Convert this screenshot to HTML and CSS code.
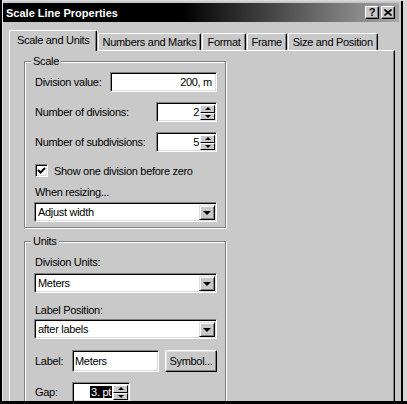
FILE: index.html
```html
<!DOCTYPE html>
<html lang="en">
<head>
    <meta charset="UTF-8">
    <meta name="viewport" content="width=device-width, initial-scale=1.0">
    <title>Scale Line Properties</title>
    <link rel="stylesheet" href="styles.css">
</head>
<body>

    <div class="window">
        <div class="titlebar">
            <span class="title">Scale Line Properties</span>
            <div class="title-buttons">
                <span class="tbtn help">?</span>
                <span class="tbtn">
                    <svg width="8" height="7" viewBox="0 0 8 7"><path d="M0.5 0.5 L7.5 6.5 M7.5 0.5 L0.5 6.5" stroke="#000" stroke-width="1.6"/></svg>
                </span>
            </div>
        </div>

        <div class="tabs">
            <div class="tab active">Scale and Units</div>
            <div class="tab">Numbers and Marks</div>
            <div class="tab">Format</div>
            <div class="tab">Frame</div>
            <div class="tab">Size and Position</div>
        </div>

        <div class="panel">
            <div class="group">
                <span class="legend">Scale</span>

                <div class="row first">
                    <span>Division value:</span>
                    <div class="field value">200, m</div>
                </div>
                <div class="row">
                    <span>Number of divisions:</span>
                    <div class="field spinbox">
                        <span class="num">2</span>
                        <div class="spin"><i class="up"></i><i class="down"></i></div>
                    </div>
                </div>
                <div class="row">
                    <span>Number of subdivisions:</span>
                    <div class="field spinbox">
                        <span class="num">5</span>
                        <div class="spin"><i class="up"></i><i class="down"></i></div>
                    </div>
                </div>

                <label class="check">
                    <span class="box">
                        <svg width="9" height="9" viewBox="0 0 9 9"><path d="M1 4 L3.5 6.5 L8 2" fill="none" stroke="#000" stroke-width="2"/></svg>
                    </span>
                    Show one division before zero
                </label>

                <div class="caption resize">When resizing...</div>
                <div class="field select">
                    <span class="choice">Adjust width</span>
                    <span class="drop"></span>
                </div>
            </div>

            <div class="group units">
                <span class="legend">Units</span>

                <div class="caption first-caption">Division Units:</div>
                <div class="field select">
                    <span class="choice">Meters</span>
                    <span class="drop"></span>
                </div>

                <div class="caption position">Label Position:</div>
                <div class="field select near">
                    <span class="choice">after labels</span>
                    <span class="drop"></span>
                </div>

                <div class="row label-row">
                    <span class="short">Label:</span>
                    <div class="field text">Meters</div>
                    <button class="button">Symbol...</button>
                </div>
                <div class="row gap-row">
                    <span class="short">Gap:</span>
                    <div class="field spinbox gap">
                        <span class="num"><b class="selected">3. pt</b></span>
                        <div class="spin"><i class="up"></i><i class="down"></i></div>
                    </div>
                </div>
            </div>
        </div>
    </div>

</body>
</html>
```

FILE: styles.css
```css
body {
    margin: 0;
    background-color: #000;
    font-family: "Liberation Sans", Arial, sans-serif;
    font-size: 11px;
    letter-spacing: -0.3px;
    color: #000;
    height: 404px;
    overflow: hidden;
}
.window {
    margin-left: 2px;
    width: 405px;
    height: 401px;
    box-sizing: border-box;
    background-color: #c9c9c9;
    border-top: 1px solid #dcdcdc;
    border-left: 1px solid #e4e4e4;
    border-right: 4px solid #d4d4d4;
    box-shadow: inset -2px 0 0 #000;
    padding: 2px 2px 0 0;
    display: flex;
    flex-direction: column;
    overflow: hidden;
}

/* Title bar */
.titlebar {
    flex-shrink: 0;
    height: 19px;
    margin-right: 2px;
    padding: 0 4px 0 3px;
    background: linear-gradient(to right, #000 45%, #a8a8a8);
    display: flex;
    align-items: center;
    justify-content: space-between;
}
.title {
    color: #fff;
    font-weight: bold;
    letter-spacing: 0;
}
.title-buttons {
    display: flex;
    gap: 2px;
}
.tbtn {
    width: 14px;
    height: 13px;
    box-sizing: border-box;
    background-color: #c9c9c9;
    border: 1px solid;
    border-color: #fff #000 #000 #fff;
    box-shadow: inset -1px -1px 0 #808080;
    display: flex;
    align-items: center;
    justify-content: center;
    font-weight: bold;
    font-size: 11px;
    line-height: 11px;
}

/* Tabs */
.tabs {
    flex-shrink: 0;
    height: 20px;
    margin-top: 8px;
    padding-left: 6px;
    display: flex;
    align-items: flex-end;
    gap: 1px;
}
.tab {
    height: 17px;
    box-sizing: border-box;
    padding: 0 4px;
    border-top: 1px solid #fff;
    border-left: 1px solid #fff;
    border-right: 1px solid #000;
    border-radius: 2px 2px 0 0;
    box-shadow: inset -1px 0 0 #808080;
    line-height: 16px;
    white-space: nowrap;
}
.tab.active {
    height: 21px;
    margin-bottom: -1px;
    padding: 0 6px 0 7px;
    background-color: #c9c9c9;
    line-height: 18px;
    position: relative;
    z-index: 1;
}

/* Page of the tab */
.panel {
    flex: 1;
    min-height: 0;
    margin: 0 6px;
    padding: 10px 0 0 14px;
    border-top: 1px solid #fff;
    border-left: 1px solid #fff;
    border-right: 1px solid #000;
    box-shadow: inset -1px 0 0 #808080;
}
.group {
    width: 202px;
    box-sizing: border-box;
    border: 1px solid #808080;
    box-shadow: inset 1px 1px 0 #fff, 1px 1px 0 #fff;
    padding: 0 8px 5px 10px;
}
.group.units {
    margin-top: 13px;
}
.legend {
    display: block;
    width: fit-content;
    margin: -7px 0 0 -4px;
    padding: 0 2px;
    line-height: 13px;
    background-color: #c9c9c9;
}

.row {
    height: 20px;
    margin-top: 10px;
    display: flex;
    align-items: center;
    justify-content: space-between;
}
.row.first {
    margin-top: 4px;
}
.caption {
    line-height: 13px;
}
.caption.resize {
    margin-top: 9px;
}
.caption.first-caption {
    margin-top: 8px;
}
.caption.position {
    margin-top: 11px;
}

/* Sunken edit fields */
.field {
    height: 20px;
    box-sizing: border-box;
    background-color: #fff;
    border: 1px solid;
    border-color: #808080 #fff #fff #808080;
    box-shadow: inset 1px 1px 0 #000, inset -1px -1px 0 #dcdcdc;
    padding: 2px 2px 1px 2px;
    line-height: 15px;
    white-space: nowrap;
}
.field.value {
    width: 107px;
    text-align: right;
    padding-right: 4px;
}
.field.spinbox {
    width: 61px;
    display: flex;
    padding-right: 1px;
}
.field.spinbox .num {
    flex: 1;
    text-align: right;
    padding-right: 1px;
}
.spin {
    width: 15px;
    display: flex;
    flex-direction: column;
}
.spin i {
    flex: 1;
    box-sizing: border-box;
    background-color: #c9c9c9;
    border: 1px solid;
    border-color: #fff #000 #000 #fff;
    display: flex;
    align-items: center;
    justify-content: center;
}
.spin i::after {
    content: "";
    border-left: 3px solid transparent;
    border-right: 3px solid transparent;
}
.spin .up::after {
    border-bottom: 3px solid #000;
}
.spin .down::after {
    border-top: 3px solid #000;
}

.field.select {
    width: 183px;
    margin-top: 3px;
    margin-left: -1px;
    display: flex;
    padding-right: 1px;
}
.units .field.select {
    margin-top: 4px;
}
.units .field.select.near {
    margin-top: 2px;
}
.choice {
    flex: 1;
    padding-left: 1px;
}
.drop {
    width: 16px;
    box-sizing: border-box;
    background-color: #c9c9c9;
    border: 1px solid;
    border-color: #dfdfdf #000 #000 #dfdfdf;
    box-shadow: inset 1px 1px 0 #fff, inset -1px -1px 0 #808080;
    display: flex;
    align-items: center;
    justify-content: center;
}
.drop::after {
    content: "";
    border-left: 4px solid transparent;
    border-right: 4px solid transparent;
    border-top: 4px solid #000;
    margin-top: 1px;
}

/* Check box */
.check {
    margin-top: 12px;
    height: 13px;
    display: flex;
    align-items: center;
    gap: 6px;
    margin-left: 0;
}
.check .box {
    width: 13px;
    height: 13px;
    box-sizing: border-box;
    background-color: #fff;
    border: 1px solid;
    border-color: #808080 #fff #fff #808080;
    box-shadow: inset 1px 1px 0 #000, inset -1px -1px 0 #dcdcdc;
    display: flex;
    align-items: center;
    justify-content: center;
}

/* Label and gap rows */
.label-row {
    height: 22px;
    margin-top: 11px;
}
.gap-row {
    margin-top: 10px;
    justify-content: flex-start;
}
.short {
    width: 37px;
}
.field.text {
    height: 22px;
    width: 87px;
    padding-top: 3px;
}
.label-row .field.text {
    margin-right: auto;
}
.button {
    width: 52px;
    height: 22px;
    box-sizing: border-box;
    font: inherit;
    letter-spacing: inherit;
    padding: 0;
    background-color: #c9c9c9;
    border: 1px solid;
    border-color: #fff #000 #000 #fff;
    box-shadow: inset -1px -1px 0 #808080, inset 1px 1px 0 #dfdfdf;
    color: #000;
}
.field.spinbox.gap {
    width: 58px;
}
.selected {
    font-weight: normal;
    background-color: #000;
    color: #fff;
    padding: 0 1px;
}
```
